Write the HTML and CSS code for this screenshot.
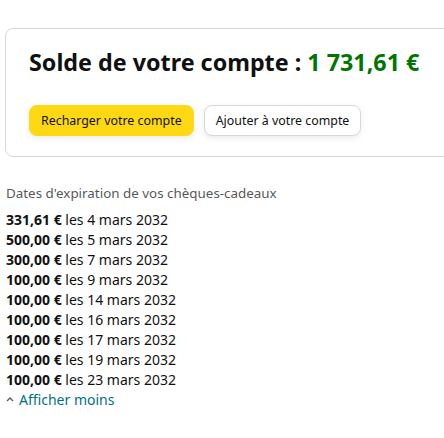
FILE: index.html
```html
<!DOCTYPE html>
<html lang="fr">
<head>
  <meta charset="UTF-8">
  <meta name="viewport" content="width=device-width, initial-scale=1.0">
  <title>Solde de votre compte</title>
  <link rel="stylesheet" href="styles.css">
</head>
<body>
  <div class="balance-card">
    <h1 class="balance-title">Solde de votre compte : <span class="amount">1 731,61 €</span></h1>
    <div class="actions">
      <button type="button" class="btn btn-primary">Recharger votre compte</button>
      <button type="button" class="btn btn-secondary">Ajouter à votre compte</button>
    </div>
  </div>

  <div class="expiry">
    <p class="expiry-title">Dates d'expiration de vos chèques-cadeaux</p>
    <ul class="expiry-list">
      <li><b>331,61 €</b> les 4 mars 2032</li>
      <li><b>500,00 €</b> les 5 mars 2032</li>
      <li><b>300,00 €</b> les 7 mars 2032</li>
      <li><b>100,00 €</b> les 9 mars 2032</li>
      <li><b>100,00 €</b> les 14 mars 2032</li>
      <li><b>100,00 €</b> les 16 mars 2032</li>
      <li><b>100,00 €</b> les 17 mars 2032</li>
      <li><b>100,00 €</b> les 19 mars 2032</li>
      <li><b>100,00 €</b> les 23 mars 2032</li>
    </ul>
    <a href="#" class="toggle">
      <svg class="caret" width="8" height="6" viewBox="0 0 8 6"><path d="M1 5 L4 2 L7 5" fill="none" stroke="#565959" stroke-width="1.3"/></svg>
      Afficher moins
    </a>
  </div>

  <ul class="links">
    <li><a href="#">Gérer vos commandes de chèques</a></li>
  </ul>
</body>
</html>
```

FILE: styles.css
```css
body {
  margin: 0;
  font-family: "Noto Sans", Arial, sans-serif;
  color: #0f1111;
  background: #fff;
  overflow: hidden;
}
.balance-card {
  margin: 28px -40px 0 5px;
  padding: 17px 23px 20px 23px;
  border: 1px solid #d5d9d9;
  border-radius: 8px;
}
.balance-title {
  margin: 0;
  font-size: 23.3px;
  font-weight: 700;
  line-height: 32px;
}
.amount {
  color: #007600;
}
.actions {
  display: flex;
  gap: 10px;
  margin-top: 27px;
}
.btn {
  height: 31px;
  padding: 0 11px;
  border-radius: 8px;
  font-family: inherit;
  font-size: 12.4px;
  color: #0f1111;
  cursor: pointer;
}
.btn-primary {
  background: #ffd814;
  border: 1px solid #ffd814;
  box-shadow: 0 2px 5px rgba(213, 217, 217, 0.5);
}
.btn-secondary {
  background: #fff;
  border: 1px solid #d5d9d9;
  box-shadow: 0 2px 5px rgba(213, 217, 217, 0.5);
}
.expiry {
  padding: 0 6px;
  margin-top: 26px;
  font-size: 14px;
}
.expiry-title {
  margin: 0 0 7px;
  font-size: 13.4px;
  color: #565959;
  line-height: 20px;
}
.expiry-list {
  list-style: none;
  margin: 0;
  padding: 0;
}
.expiry-list li {
  line-height: 20px;
}
.toggle {
  display: flex;
  align-items: center;
  gap: 5px;
  line-height: 20px;
  color: #007185;
  text-decoration: none;
}
.caret {
  margin-top: -2px;
}
.links {
  margin: 26px 0 0;
  padding-left: 32px;
  font-size: 14px;
  color: #565959;
}
.links a {
  color: #007185;
  text-decoration: none;
}
```
